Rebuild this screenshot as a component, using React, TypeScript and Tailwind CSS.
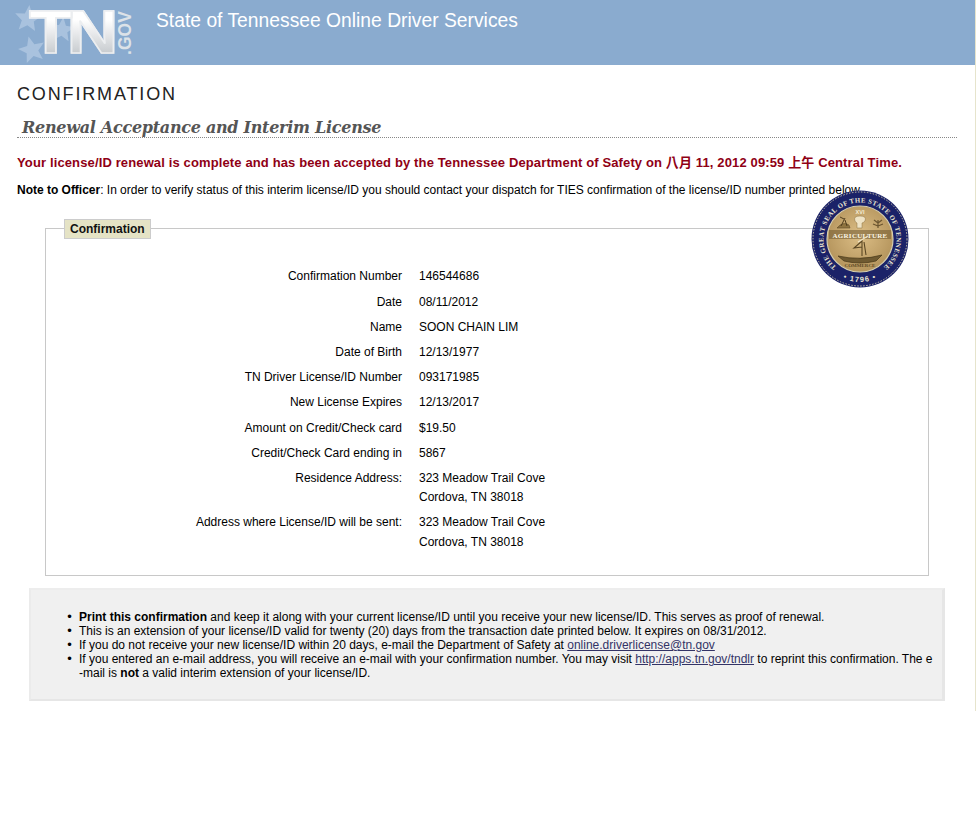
const SANS = "font-['Liberation_Sans','Noto_Sans_CJK_TC',sans-serif]";

function Star({ x, y, r, t = 0.2 }: { x: number; y: number; r: number; t?: number }) {
  const pts = Array.from({ length: 10 }, (_, i) => {
    const a = (Math.PI / 5) * i - Math.PI / 2 + t;
    const rr = i % 2 === 0 ? r : r * 0.45;
    return `${x + rr * Math.cos(a)},${y + rr * Math.sin(a)}`;
  }).join(" ");
  return <polygon points={pts} fill="#a9c2de" />;
}

function Logo() {
  return (
    <div className="relative h-[65px] w-[140px] shrink-0">
      <svg className="absolute left-0 top-0" width="80" height="65" viewBox="0 0 80 65">
        <Star x={28} y={19} r={14} t={0.1} />
        <Star x={32} y={50} r={14} t={-0.25} />
        <Star x={62} y={30} r={13} t={0.1} />
      </svg>
      <span className="absolute left-[29px] top-[0px] origin-left scale-x-[1.17] bg-gradient-to-b from-[#ffffff] from-[30%] to-[#c4c8cc] to-[85%] bg-clip-text pr-[6px] font-['Liberation_Sans',sans-serif] text-[61px] font-bold leading-[65px] tracking-[-5px] text-transparent [-webkit-text-stroke:1.5px_#eceef0]">
        TN
      </span>
      <span className="absolute left-[101px] top-[23px] block w-[48px] origin-center -rotate-90 text-center font-['Liberation_Sans',sans-serif] text-[17.5px] font-bold leading-[20px] text-[#dce2e8]">
        .GOV
      </span>
    </div>
  );
}

function Seal() {
  return (
    <svg width="98" height="98" viewBox="0 0 98 98">
      <defs>
        <radialGradient id="gold" cx="50%" cy="45%" r="55%">
          <stop offset="0%" stopColor="#dcbe86" />
          <stop offset="100%" stopColor="#b4945c" />
        </radialGradient>
        <path id="sealTop" d="M 25.5 77 A 36.5 36.5 0 1 1 72.5 77" fill="none" />
        <path id="sealBot" d="M 24.3 84.2 A 43 43 0 0 0 73.7 84.2" fill="none" />
      </defs>
      <circle cx="49" cy="49" r="48.5" fill="#1b2268" />
      <circle cx="49" cy="49" r="47" fill="none" stroke="#c9c3a8" strokeWidth="1" strokeDasharray="1.5 1.5" />
      <circle cx="49" cy="49" r="33" fill="url(#gold)" stroke="#d6cfae" strokeWidth="1.2" />
      <text fill="#e9e5d2" fontSize="6.8" fontWeight="700" fontFamily="'Liberation Serif',serif">
        <textPath href="#sealTop" startOffset="0" textLength="178" lengthAdjust="spacing">THE GREAT SEAL OF THE STATE OF TENNESSEE</textPath>
      </text>
      <text fill="#e9e5d2" fontSize="7.4" fontWeight="700" letterSpacing="1.1" fontFamily="'Liberation Sans',sans-serif" textAnchor="middle">
        <textPath href="#sealBot" startOffset="50%">• 1796 •</textPath>
      </text>
      <text x="49" y="24" textAnchor="middle" fill="#f4ecd6" fontSize="5.5" fontWeight="700" fontFamily="'Liberation Sans',sans-serif">XVI</text>
      <path d="M44 31 q-2-5 5-5 q7 0 5 5 q-2 2-3 2 v5 h-5 v-5 q-1 0-2-2z" fill="#efe3c5" stroke="#8a7140" strokeWidth="0.5" />
      <path d="M26 38 q6-7 12-3 l1 3z" fill="#8f7440" stroke="#5e4a25" strokeWidth="0.6" />
      <path d="M30 36 l4-8 M33 29 l-4-2 M36 36 l-2-6" stroke="#4f3d1d" strokeWidth="1" fill="none" />
      <path d="M67 38 v-8 M67 33 l-4-3 M67 33 l4-3 M67 36 l-5-2 M67 36 l5-2" stroke="#6b5530" strokeWidth="1.2" fill="none" />
      <rect x="18" y="40" width="62" height="9" fill="#6f5830" fillOpacity="0.55" />
      <text x="49" y="47.5" textAnchor="middle" fill="#faf4e2" fontSize="7" fontWeight="700" letterSpacing="0.3" fontFamily="'Liberation Serif',serif">AGRICULTURE</text>
      <path d="M51 50 v16 M51 51 l-8 7 l8-1 M53 52 l2 13" fill="none" stroke="#5b4724" strokeWidth="1.1" />
      <path d="M47 52 l10-6" stroke="#efe4c6" strokeWidth="1.1" />
      <path d="M27 66 q22 5 44-1 l-6 6 q-16 4-32 0z" fill="#6f5a31" stroke="#463617" strokeWidth="0.7" />
      <text x="49" y="77" textAnchor="middle" fill="#5c4823" fontSize="5" fontWeight="700" fontFamily="'Liberation Serif',serif">COMMERCE</text>
    </svg>
  );
}

const rows: [string, string[], string][] = [
  ["Confirmation Number", ["146544686"], "h-[26px] leading-[19.5px]"],
  ["Date", ["08/11/2012"], "h-[25px] leading-[19.5px]"],
  ["Name", ["SOON CHAIN LIM"], "h-[25px] leading-[19.5px]"],
  ["Date of Birth", ["12/13/1977"], "h-[25px] leading-[19.5px]"],
  ["TN Driver License/ID Number", ["093171985"], "h-[25px] leading-[19.5px]"],
  ["New License Expires", ["12/13/2017"], "h-[26px] leading-[19.5px]"],
  ["Amount on Credit/Check card", ["$19.50"], "h-[25px] leading-[19.5px]"],
  ["Credit/Check Card ending in", ["5867"], "h-[25px] leading-[19.5px]"],
  ["Residence Address:", ["323 Meadow Trail Cove", "Cordova, TN 38018"], "h-[44px] leading-[19px]"],
  ["Address where License/ID will be sent:", ["323 Meadow Trail Cove", "Cordova, TN 38018"], "h-[44px] leading-[19.5px]"],
];

export default function App() {
  return (
    <div className={`relative h-[828px] w-[976px] bg-white text-[12px] text-black ${SANS}`}>
      <div className="h-[711px] w-[976px] border-r border-[#e6e4cc]">
        <header className="flex h-[65px] bg-[#8aabcf]">
          <Logo />
          <div className="ml-[16px] pt-[10px] text-[19.3px] leading-[21px] text-white">State of Tennessee Online Driver Services</div>
        </header>

        <h1 className="ml-[17px] mt-[18px] text-[18px] leading-[22px] tracking-[1.85px] text-[#222]">CONFIRMATION</h1>

        <div className="ml-[17px] mr-[18px] mt-[10px] h-[23px] border-b border-dotted border-[#888]">
          <h2 className="whitespace-nowrap pl-[5px] pt-[3px] font-['DejaVu_Serif',serif] text-[16px] font-bold italic leading-[20px] tracking-[-0.28px] text-[#555]">
            Renewal Acceptance and Interim License
          </h2>
        </div>

        <p className="ml-[17px] mt-[17px] whitespace-nowrap text-[13px] font-bold leading-[16px] tracking-[0.13px] text-[#8f0015]">
          Your license/ID renewal is complete and has been accepted by the Tennessee Department of Safety on 八月 11, 2012 09:59 上午 Central Time.
        </p>
        <p className="ml-[17px] mt-[12px] whitespace-nowrap leading-[14px] tracking-[-0.012px]">
          <b>Note to Officer</b>: In order to verify status of this interim license/ID you should contact your dispatch for TIES confirmation of the license/ID number printed below.
        </p>

        <section className="relative ml-[45px] mt-[31px] h-[348px] w-[884px] border border-[#c8c8c8]">
          <div className="absolute left-[18px] top-[-10px] h-[20px] border border-[#ccc] bg-[#e5e3c5] px-[5px] font-bold leading-[18px] text-[#111]">
            Confirmation
          </div>
          <div className="pt-[38px]">
            {rows.map(([label, vals, h]) => (
              <div key={label} className={`flex ${h}`}>
                <div className="w-[356px] text-right">{label}</div>
                <div className="ml-[17px]">
                  {vals.map((v) => (
                    <div key={v}>{v}</div>
                  ))}
                </div>
              </div>
            ))}
          </div>
          <div className="absolute left-[765px] top-[-39px]">
            <Seal />
          </div>
        </section>

        <section className="ml-[29px] mt-[12px] h-[113px] w-[916px] border-b-[2px] border-l-2 border-r-[3px] border-t-2 border-b-[#e6e6e6] border-l-[#ebebeb] border-r-[#e6e6e6] border-t-[#ededed] bg-[#f0f0f0] pl-[48px] pr-[2px] pt-[20px]">
          <ul className="list-['•__'] leading-[14px] marker:text-[13px]">
            <li><b>Print this confirmation</b> and keep it along with your current license/ID until you receive your new license/ID. This serves as proof of renewal.</li>
            <li>This is an extension of your license/ID valid for twenty (20) days from the transaction date printed below. It expires on 08/31/2012.</li>
            <li>If you do not receive your new license/ID within 20 days, e-mail the Department of Safety at <a className="text-[#333366] underline" href="#">online.driverlicense@tn.gov</a></li>
            <li className="pt-[0.4px] leading-[13.4px]">If you entered an e-mail address, you will receive an e-mail with your confirmation number. You may visit <a className="text-[#333366] underline" href="#">http://apps.tn.gov/tndlr</a> to reprint this confirmation. The e<br />-mail is <b>not</b> a valid interim extension of your license/ID.</li>
          </ul>
        </section>
      </div>
    </div>
  );
}
